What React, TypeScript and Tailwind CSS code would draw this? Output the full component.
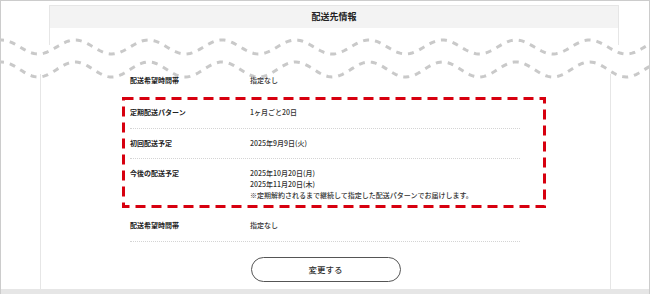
import React from "react";

const FONT = "font-['Noto_Sans_CJK_JP',sans-serif]";

function wavePath(centerY: number, amp: number) {
  // peaks at x = 75 + 73.5k
  const period = 73.5;
  const pts: string[] = [];
  for (let x = -2; x <= 652; x += 2) {
    const y = centerY - amp * Math.cos(((x - 75) / period) * Math.PI * 2);
    pts.push(`${x},${y.toFixed(2)}`);
  }
  return "M" + pts.join(" L");
}

function Waves() {
  // drawn in page coordinates shifted up by 30px
  return (
    <svg
      aria-hidden
      className="pointer-events-none absolute left-[-1px] top-[-15px]"
      width={650}
      height={55}
      viewBox="0 30 650 55"
    >
      <path d={wavePath(47, 7)} fill="none" stroke="#c9c9c9" strokeWidth={3} strokeDasharray="6 6" />
      <path d={wavePath(69.5, 7.5)} fill="none" stroke="#c9c9c9" strokeWidth={3} strokeDasharray="6 6" />
    </svg>
  );
}

type Row = { label: string; lines: string[] };

function InfoRow({ row, className }: { row: Row; className: string }) {
  return (
    <div className={`flex ${className}`}>
      <div className="w-[120px] shrink-0 text-[7px] font-bold leading-[11px] text-[#222]">{row.label}</div>
      <div className="text-[7px] font-medium leading-[11px] text-[#333]">
        {row.lines.map((line) => (
          <div key={line}>{line}</div>
        ))}
      </div>
    </div>
  );
}

export default function App() {
  return (
    <div className={`relative flex h-[294px] w-[650px] flex-col overflow-hidden border border-b-0 border-[#cccccc] bg-white ${FONT}`}>
      {/* upper part of the card (header) */}
      <div className="ml-[48px] mt-[4px] h-[40px] w-[570px] border-x border-t border-[#e6e6e6]">
        <div className="flex h-[22px] items-center justify-center bg-[#f3f3f3] text-[9px] font-bold text-[#222]">
          配送先情報
        </div>
      </div>

      {/* torn section */}
      <div className="relative z-10 h-[29px] bg-white">
        <Waves />
      </div>

      {/* lower part of the card */}
      <div className="ml-[39px] flex w-[571px] flex-1 flex-col border-x border-[#e6e6e6]">
        <div className="relative z-20 pl-[89px] pt-[1px]">
          <InfoRow row={{ label: "配送希望時間帯", lines: ["指定なし"] }} className="" />
        </div>

        {/* highlighted block */}
        <div className="relative ml-[81px] mt-[11px] h-[111px] w-[424px] p-[3px] pl-[8px]">
          <svg aria-hidden className="pointer-events-none absolute inset-0" width={424} height={111}>
            <rect
              x={1.5}
              y={1.5}
              width={421}
              height={108}
              fill="none"
              stroke="#d7000f"
              strokeWidth={3}
              strokeDasharray="10 6"
            />
          </svg>
          <InfoRow
            row={{ label: "定期配送パターン", lines: ["1ヶ月ごと20日"] }}
            className="w-[390px] border-b border-dotted border-[#d4d4d4] pb-[10px] pt-[7px]"
          />
          <InfoRow
            row={{ label: "初回配送予定", lines: ["2025年9月9日(火)"] }}
            className="w-[390px] border-b border-dotted border-[#d4d4d4] pb-[9px] pt-[9px]"
          />
          <InfoRow
            row={{
              label: "今後の配送予定",
              lines: [
                "2025年10月20日(月)",
                "2025年11月20日(木)",
                "※定期解約されるまで継続して指定した配送パターンでお届けします。",
              ],
            }}
            className="w-[390px] pt-[9px]"
          />
        </div>

        <div className="pl-[89px]">
          <InfoRow
            row={{ label: "配送希望時間帯", lines: ["指定なし"] }}
            className="w-[390px] border-b border-dotted border-[#d4d4d4] pb-[10px] pt-[12px]"
          />
        </div>

        <button
          type="button"
          className="mx-auto mt-[15px] flex h-[25px] w-[150px] items-center justify-center rounded-full border border-[#555] bg-white text-[8.5px] font-medium text-[#333]"
        >
          変更する
        </button>
      </div>

      <div className="h-[5px] shrink-0 bg-[#e6e6e6]" />
    </div>
  );
}
